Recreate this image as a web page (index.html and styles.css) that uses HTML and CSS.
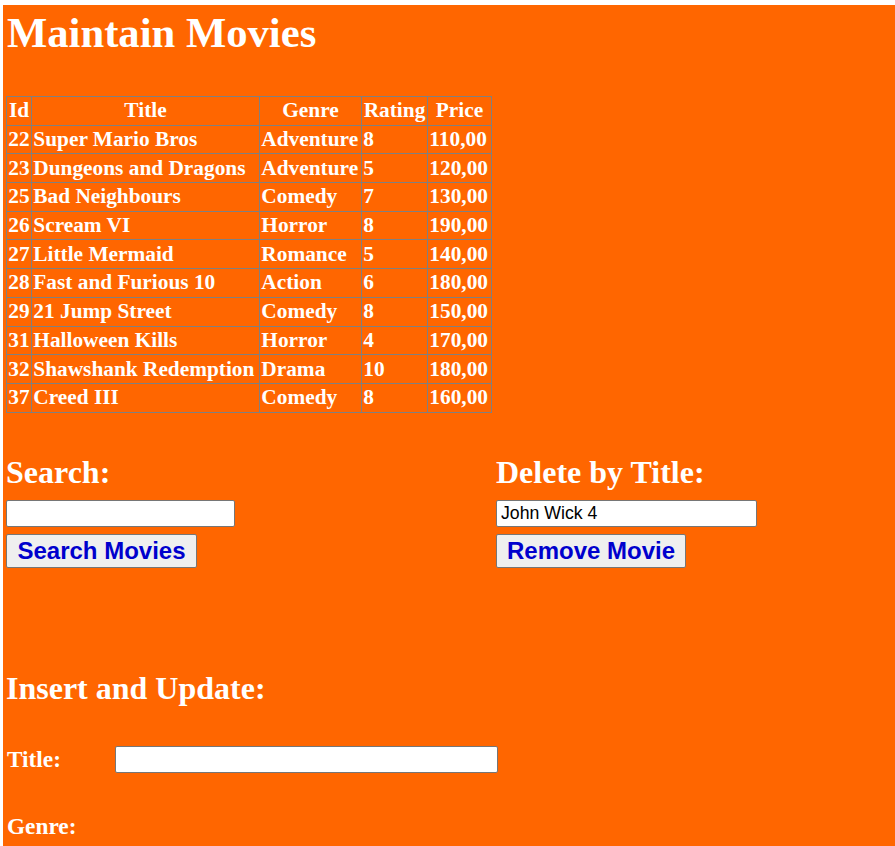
FILE: index.html
```html
<!DOCTYPE html>
<html lang="en">
<head>
<meta charset="utf-8">
<title>Maintain Movies</title>
<link rel="stylesheet" href="styles.css">
</head>
<body>
<div class="page">
  <h1 class="page-title">Maintain Movies</h1>

  <table class="movies">
    <colgroup>
      <col class="c-id"><col class="c-title"><col class="c-genre"><col class="c-rating"><col class="c-price">
    </colgroup>
    <thead>
      <tr><th>Id</th><th>Title</th><th>Genre</th><th>Rating</th><th>Price</th></tr>
    </thead>
    <tbody>
      <tr><td>22</td><td>Super Mario Bros</td><td>Adventure</td><td>8</td><td>110,00</td></tr>
      <tr><td>23</td><td>Dungeons and Dragons</td><td>Adventure</td><td>5</td><td>120,00</td></tr>
      <tr><td>25</td><td>Bad Neighbours</td><td>Comedy</td><td>7</td><td>130,00</td></tr>
      <tr><td>26</td><td>Scream VI</td><td>Horror</td><td>8</td><td>190,00</td></tr>
      <tr><td>27</td><td>Little Mermaid</td><td>Romance</td><td>5</td><td>140,00</td></tr>
      <tr><td>28</td><td>Fast and Furious 10</td><td>Action</td><td>6</td><td>180,00</td></tr>
      <tr><td>29</td><td>21 Jump Street</td><td>Comedy</td><td>8</td><td>150,00</td></tr>
      <tr><td>31</td><td>Halloween Kills</td><td>Horror</td><td>4</td><td>170,00</td></tr>
      <tr><td>32</td><td>Shawshank Redemption</td><td>Drama</td><td>10</td><td>180,00</td></tr>
      <tr><td>37</td><td>Creed III</td><td>Comedy</td><td>8</td><td>160,00</td></tr>
    </tbody>
  </table>

  <div class="tools">
    <div class="tool">
      <h2 class="section-title">Search:</h2>
      <input class="field field-search" type="text">
      <button class="btn" type="button">Search Movies</button>
    </div>
    <div class="tool">
      <h2 class="section-title">Delete by Title:</h2>
      <input class="field field-delete" type="text" value="John Wick 4">
      <button class="btn btn-remove" type="button">Remove Movie</button>
    </div>
  </div>

  <h2 class="section-title insert-title">Insert and Update:</h2>
  <div class="form-row">
    <label class="form-label">Title:</label>
    <input class="field field-title" type="text">
  </div>
  <div class="form-row form-row-genre">
    <label class="form-label">Genre:</label>
  </div>
</div>
</body>
</html>
```

FILE: styles.css
```css
html, body {
  margin: 0;
  padding: 0;
  background: #ffffff;
}

body {
  font-family: "Liberation Serif", "Times New Roman", serif;
  font-weight: bold;
  color: #ffffff;
}

.page {
  margin: 5px 0 0 3px;
  padding: 3px 0 60px 3px;
  background: #ff6600;
  min-height: 900px;
}

.page-title {
  margin: 0;
  font-size: 42.67px;
  line-height: 49px;
  font-weight: bold;
  padding-left: 1px;
}

.movies {
  margin-top: 39px;
  border-collapse: collapse;
  table-layout: fixed;
  width: 485px;
  border: 1px solid #808080;
  font-size: 21.33px;
}

.c-id { width: 25px; }
.c-title { width: 228px; }
.c-genre { width: 102px; }
.c-rating { width: 66px; }
.c-price { width: 64px; }

.movies th,
.movies td {
  border: 1px solid #808080;
  padding: 1.35px 1.33px;
  line-height: 25px;
  white-space: nowrap;
  overflow: hidden;
}

.movies th {
  text-align: center;
  font-weight: bold;
}

.movies td {
  text-align: left;
}

.tools {
  display: grid;
  grid-template-columns: 490px 1fr;
  margin-top: 41px;
}

.tool {
  display: flex;
  flex-direction: column;
  align-items: flex-start;
}

.section-title {
  margin: 0;
  font-size: 32px;
  line-height: 37px;
  font-weight: bold;
}

.field {
  box-sizing: border-box;
  height: 27px;
  margin: 0;
  border: 1px solid #767676;
  border-radius: 2px;
  background: #ffffff;
  padding: 0 4px;
  font-family: "Liberation Sans", Arial, sans-serif;
  font-weight: normal;
  font-size: 17.7px;
  color: #000000;
}

.tool .field {
  margin-top: 9px;
}

.field-search { width: 229px; }
.field-delete { width: 261px; }
.field-title { width: 383px; }

.btn {
  box-sizing: border-box;
  margin-top: 7px;
  width: 191px;
  height: 34px;
  padding: 0;
  border: 1px solid #767676;
  border-radius: 2px;
  background: #efefef;
  color: #0000cd;
  font-family: "Liberation Sans", Arial, sans-serif;
  font-weight: bold;
  font-size: 24px;
  line-height: 32px;
  text-align: center;
}

.btn-remove { width: 190px; }

.insert-title {
  margin-top: 102px;
}

.form-row {
  display: flex;
  align-items: center;
  height: 27px;
  margin-top: 39px;
}

.form-row-genre {
  margin-top: 40px;
}

.form-label {
  width: 109px;
  flex: none;
  font-size: 23.3px;
  line-height: 27px;
  padding-left: 1px;
  box-sizing: border-box;
}
```
